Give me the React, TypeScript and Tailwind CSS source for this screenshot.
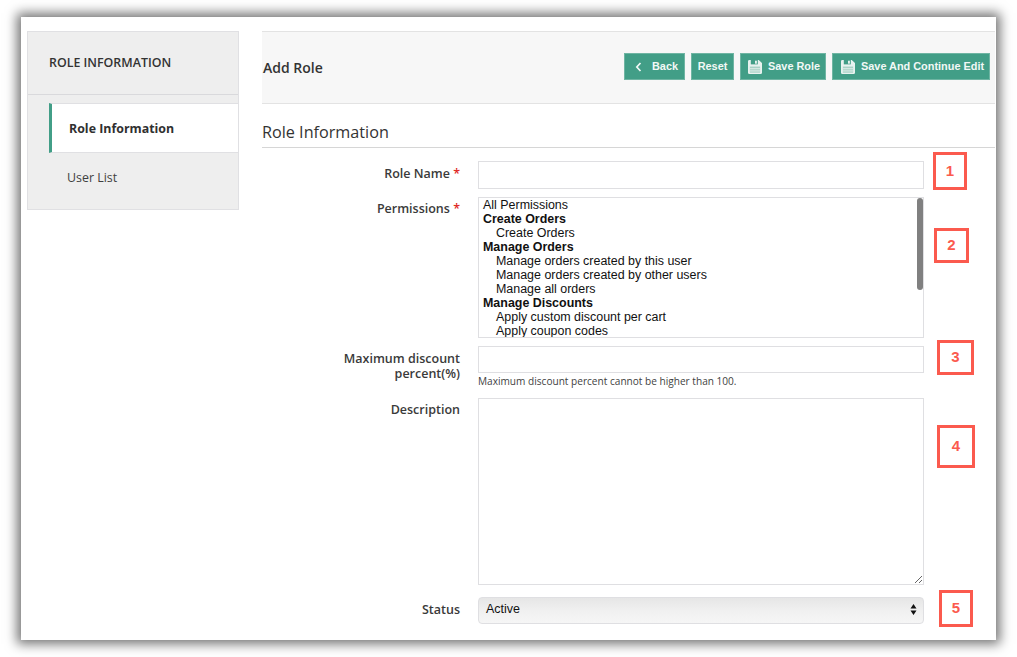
const sans = "font-['Open_Sans',sans-serif]";

function SaveIcon() {
  return (
    <svg width="14" height="14" viewBox="0 0 15 16" preserveAspectRatio="none" className="shrink-0">
      <path d="M0 1.5 A1.5 1.5 0 0 1 1.5 0 H11.5 L15 3.5 V14.5 A1.5 1.5 0 0 1 13.5 16 H1.5 A1.5 1.5 0 0 1 0 14.5 Z" fill="#e8f2ef" />
      <rect x="3" y="0" width="7.5" height="5" fill="#429e87" />
      <rect x="7.5" y="0.8" width="2" height="3.4" fill="#e8f2ef" />
      <rect x="2" y="7.5" width="11" height="7" fill="#a9d2c6" />
      <rect x="2" y="9.5" width="11" height="1" fill="#e8f2ef" />
      <rect x="2" y="12" width="11" height="1" fill="#e8f2ef" />
    </svg>
  );
}

function Btn({ children, className }: { children: React.ReactNode; className: string }) {
  return (
    <button className={`flex h-[27px] items-center whitespace-nowrap bg-[#429e87] border border-[#6fb5a3] font-['Liberation_Sans',sans-serif] text-[10.9px] font-bold text-[#f2f8f6] ${className}`}>
      {children}
    </button>
  );
}

function Callout({ n, className }: { n: number; className: string }) {
  return (
    <div className={`absolute flex items-center justify-center border-[3px] border-[#fb5a4e] bg-white font-['Liberation_Sans',sans-serif] text-[15px] font-bold text-[#fb5a4e] ${className}`}>
      {n}
    </div>
  );
}

function Label({ children, req, className = "" }: { children: React.ReactNode; req?: boolean; className?: string }) {
  return (
    <div className={`w-[198px] shrink-0 text-right text-[12.5px] font-semibold leading-[15px] text-[#3a3a3a] ${className}`}>
      {children}
      {req && <span className="text-[#e02b27]"> *</span>}
    </div>
  );
}

const perms: [string, number][] = [
  ["All Permissions", 0],
  ["Create Orders", 1],
  ["Create Orders", 2],
  ["Manage Orders", 1],
  ["Manage orders created by this user", 2],
  ["Manage orders created by other users", 2],
  ["Manage all orders", 2],
  ["Manage Discounts", 1],
  ["Apply custom discount per cart", 2],
  ["Apply coupon codes", 2],
];

export default function App() {
  return (
    <div className="h-[657px] w-[1017px] overflow-hidden bg-white pl-[21px] pt-[17px]">
      <div className={`${sans} relative flex h-[623px] w-[975px] bg-white pl-[6px] pt-[14px] shadow-[0_0_11px_4px_rgba(0,0,0,0.55)]`}>
        {/* sidebar */}
        <aside className="h-[179px] w-[212px] shrink-0 border border-[#e0e0e3] bg-[#eeeeee]">
          <div className="flex h-[63px] items-center border-b border-[#d9d9dc] pl-[21px] text-[12.4px] font-semibold text-[#333333]">
            ROLE INFORMATION
          </div>
          <div className="ml-[21px] mt-[8px]">
            <div className="flex h-[50px] items-center border-y border-l-[3px] border-y-[#e0e0e3] border-l-[#429e87] bg-white pl-[17px] pt-[2px] text-[12.4px] font-bold text-[#303030]">
              Role Information
            </div>
            <div className="flex h-[47px] items-center pl-[18px] pt-[3px] text-[12.4px] text-[#3f3f3f]">User List</div>
          </div>
        </aside>

        {/* main */}
        <main className="ml-[23px] w-[733px] shrink-0">
          <header className="flex h-[73px] items-center justify-between border-y border-[#e3e3e3] bg-[#f7f7f7] pl-[1px] pr-[5px]">
            <h1 className="text-[14px] font-semibold text-[#333333]">Add Role</h1>
            <div className="flex gap-[6px] pb-[2px]">
              <Btn className="w-[61px] pl-[10px]">
                <svg width="7" height="10" viewBox="0 0 7 10" className="mr-[10px]">
                  <path d="M5.5 1 L1.8 5 L5.5 9" fill="none" stroke="#f2f8f6" strokeWidth="1.7" />
                </svg>
                Back
              </Btn>
              <Btn className="w-[43px] justify-center">Reset</Btn>
              <Btn className="w-[86px] pl-[7px]">
                <SaveIcon />
                <span className="ml-[6px]">Save Role</span>
              </Btn>
              <Btn className="w-[158px] pl-[8px]">
                <SaveIcon />
                <span className="ml-[6px]">Save And Continue Edit</span>
              </Btn>
            </div>
          </header>

          <h2 className="mt-[16px] h-[28px] border-b border-[#d6d6d6] text-[16.2px] leading-[24px] text-[#333333]">Role Information</h2>

          <div className="mt-[13px] flex flex-col">
            <div className="flex h-[28px] items-start gap-[18px]">
              <Label req className="pt-[5px]">Role Name</Label>
              <input className="h-[28px] w-[446px] border border-[#dfdfe2] bg-white" />
            </div>

            <div className="mt-[8px] flex gap-[18px]">
              <Label req className="pt-[4px]">Permissions</Label>
              <div className="relative h-[141px] w-[446px] overflow-hidden border border-[#dfdfe2] bg-white pl-[4px] font-['Liberation_Sans',sans-serif] text-[12.45px] leading-[14px] text-[#111111]">
                {perms.map(([t, k], i) => (
                  <div key={i} className={k === 1 ? "font-bold" : k === 2 ? "pl-[13px]" : ""}>{t}</div>
                ))}
                <div className="absolute right-0 top-0 h-[92px] w-[6px] rounded-full bg-[#808080]" />
              </div>
            </div>

            <div className="mt-[8px] flex gap-[18px]">
              <Label className="pt-[5px]">Maximum discount<br />percent(%)</Label>
              <div>
                <input className="block h-[27px] w-[446px] border border-[#dfdfe2] bg-white" />
                <p className="h-[16px] text-[10.1px] leading-[16px] text-[#3f3f3f]">Maximum discount percent cannot be higher than 100.</p>
              </div>
            </div>

            <div className="mt-[9px] flex gap-[18px]">
              <Label className="pt-[4px]">Description</Label>
              <textarea className="block h-[187px] w-[446px] border border-[#dfdfe2] bg-white" />
            </div>

            <div className="mt-[12px] flex gap-[18px]">
              <Label className="pt-[5px]">Status</Label>
              <div className="flex h-[27px] w-[446px] items-center justify-between rounded-[4px] border border-[#dfdfe2] bg-gradient-to-b from-[#e6e6e6] via-[#f0f0f0] to-[#f6f6f6] pb-[2px] pl-[7px] pr-[6px] font-['Liberation_Sans',sans-serif] text-[12.5px] text-[#111111]">
                Active
                <svg width="7" height="13" viewBox="0 0 7 13">
                  <path d="M3.5 1 L6.5 5.5 H0.5 Z M3.5 12 L0.5 7.5 H6.5 Z" fill="#111111" />
                </svg>
              </div>
            </div>
          </div>
        </main>

        <Callout n={1} className="left-[912px] top-[135px] h-[38px] w-[34px]" />
        <Callout n={2} className="left-[913px] top-[211px] h-[35px] w-[35px]" />
        <Callout n={3} className="left-[916px] top-[323px] h-[35px] w-[37px]" />
        <Callout n={4} className="left-[916px] top-[408px] h-[43px] w-[38px]" />
        <Callout n={5} className="left-[918px] top-[573px] h-[37px] w-[34px]" />
      </div>
    </div>
  );
}
